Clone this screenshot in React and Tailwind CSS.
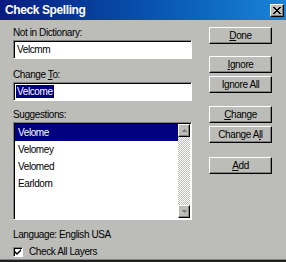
import React from 'react';

const font = { fontFamily: '"Liberation Sans", Arial, sans-serif' };

const raised =
  'border border-t-white border-l-white border-r-black border-b-black shadow-[inset_-1px_-1px_0_#808080]';
const sunken =
  'border border-t-[#808080] border-l-[#808080] border-r-white border-b-white shadow-[inset_1px_1px_0_#000]';

const Btn = ({ children, className = '' }) => (
  <button
    className={`w-[63px] h-[17px] bg-[#bcbdb9] text-[10px] tracking-[-0.4px] text-black leading-none flex items-center justify-center ${raised} ${className}`}
  >
    {children}
  </button>
);

const ScrollArrow = ({ up }) => (
  <div className={`w-[12px] h-[13px] bg-[#bcbdb9] flex items-center justify-center ${raised}`}>
    <svg width="7" height="4" viewBox="0 0 7 4">
      {up ? (
        <path d="M3 0h1v1h1v1h1v1H1V2h1V1h1z" fill="#808080" />
      ) : (
        <path d="M1 0h5v1H5v1H4v1H3V2H2V1H1z" fill="#808080" />
      )}
    </svg>
  </div>
);

export default function App() {
  const suggestions = ['Velome', 'Velomey', 'Velomed', 'Earldom'];

  return (
    <div style={font} className="w-[286px] h-[262px] bg-[#bcbdb9] flex flex-col overflow-hidden">
      <div className="h-[20px] flex items-center justify-between pl-[5px] pr-[2px] bg-gradient-to-r from-[#0a1a80] to-[#1a84d8]">
        <span className="text-white text-[12px] tracking-[-0.4px] font-bold">Check Spelling</span>
        <div className={`w-[14px] h-[13px] bg-[#bcbdb9] flex items-center justify-center ${raised}`}>
          <svg width="8" height="7" viewBox="0 0 8 7">
            <path d="M0 0L7 7M1 0L8 7M7 0L0 7M8 0L1 7" stroke="#000" strokeWidth="1" />
          </svg>
        </div>
      </div>

      <div className="flex flex-1 border-b border-b-[#808080]">
        <div className="w-[196px] pl-[13px] flex flex-col text-[10px] tracking-[-0.4px] text-black">
          <div className="mt-[7px] h-[12px] leading-[12px]">Not in Dictionary:</div>
          <div className={`mt-[1px] w-[179px] h-[19px] bg-white flex items-center px-[3px] ${sunken}`}>
            Velcmm
          </div>

          <div className="mt-[10px] h-[12px] leading-[12px]">
            Change <span className="underline">T</span>o:
          </div>
          <div className={`mt-[1px] w-[179px] h-[19px] bg-white flex items-center px-[2px] ${sunken}`}>
            <span className="bg-[#000080] text-white px-[1px] leading-[13px]">Velcome</span>
          </div>

          <div className="mt-[8px] h-[12px] leading-[12px]">
            Su<span className="underline">g</span>gestions:
          </div>
          <div className={`mt-[1px] w-[179px] h-[98px] bg-white flex ${sunken}`}>
            <div className="flex-1 flex flex-col pt-[1px] pl-[1px]">
              {suggestions.map((s, i) => (
                <div
                  key={s}
                  className={`h-[17px] leading-[17px] pl-[3px] ${i === 0 ? 'bg-[#000080] text-white' : ''}`}
                >
                  {s}
                </div>
              ))}
            </div>
            <div className="w-[12px] mt-[1px] mb-[1px] mr-[1px] flex flex-col bg-[repeating-conic-gradient(#bcbdb9_0_25%,#ffffff_0_50%)] bg-[length:2px_2px]">
              <ScrollArrow up />
              <div className="flex-1" />
              <ScrollArrow />
            </div>
          </div>

          <div className="mt-[9px] h-[12px] leading-[12px]">Language: English USA</div>
          <div className="mt-[3px] flex items-center gap-[6px]">
            <div className={`w-[10px] h-[10px] bg-white flex items-center justify-center ${sunken}`}>
              <svg width="6" height="6" viewBox="0 0 6 6">
                <path d="M0 2l2 2 4-4v2l-4 4-2-2z" fill="#000" />
              </svg>
            </div>
            <span>Check All Layers</span>
          </div>
        </div>

        <div className="flex flex-col pl-[13px] pt-[7px]">
          <Btn>
            <span className="underline">D</span>one
          </Btn>
          <Btn className="mt-[12px]">
            <span className="underline">I</span>gnore
          </Btn>
          <Btn className="mt-[3px]">
            I<span className="underline">g</span>nore All
          </Btn>
          <Btn className="mt-[13px]">
            <span className="underline">C</span>hange
          </Btn>
          <Btn className="mt-[3px]">
            Change A<span className="underline">l</span>l
          </Btn>
          <Btn className="mt-[14px]">
            <span className="underline">A</span>dd
          </Btn>
        </div>
      </div>
      <div className="h-[2px] bg-[#202020]" />
    </div>
  );
}
